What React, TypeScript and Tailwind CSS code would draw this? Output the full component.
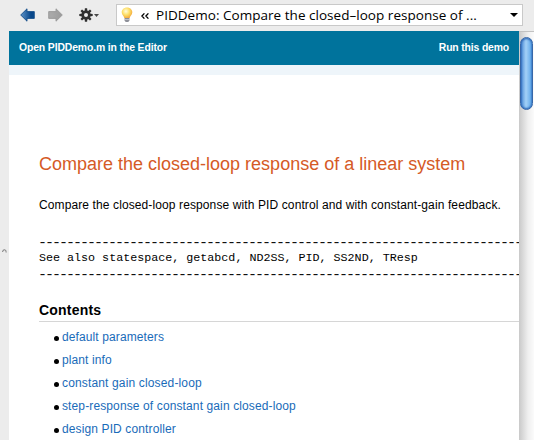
const contents = [
  { label: 'default parameters', track: 'tracking-[0.11px]' },
  { label: 'plant info', track: 'tracking-[0.1px]' },
  { label: 'constant gain closed-loop', track: 'tracking-[0.15px]' },
  { label: 'step-response of constant gain closed-loop', track: 'tracking-[0.12px]' },
  { label: 'design PID controller', track: 'tracking-[0.12px]' },
];

const rule = '-'.repeat(69);

function ArrowIcon({ forward = false }: { forward?: boolean }) {
  return (
    <svg width="15" height="14" viewBox="0 0 15 14" className={forward ? '-scale-x-100' : ''}>
      <defs>
        <linearGradient id={forward ? 'fwd' : 'back'} x1="0" x2="1">
          <stop offset="0" stopColor={forward ? '#9a9a9a' : '#5f94c8'} />
          <stop offset="0.75" stopColor={forward ? '#a8a8a8' : '#08478a'} />
        </linearGradient>
      </defs>
      <path
        d="M0.7 7 L7 0.8 V3.6 H14.3 V10.4 H7 V13.2 Z"
        fill={forward ? 'url(#fwd)' : 'url(#back)'}
        stroke={forward ? '#999999' : '#164f8a'}
        strokeWidth="0.9"
      />
    </svg>
  );
}

function GearIcon() {
  const angles = [0, 45, 90, 135, 180, 225, 270, 315];
  return (
    <svg width="14" height="14" viewBox="0 0 14 14">
      {angles.map((a) => (
        <path key={a} d="M5.6 3.5 L5.9 0.3 H8.1 L8.4 3.5 Z" fill="#303030" transform={`rotate(${a} 7 7)`} />
      ))}
      <circle cx="7" cy="7" r="3.3" fill="none" stroke="#303030" strokeWidth="2.6" />
    </svg>
  );
}

function BulbIcon() {
  return (
    <svg width="12" height="16" viewBox="0 0 12 16">
      <defs>
        <radialGradient id="bulb" cx="0.4" cy="0.35" r="0.65">
          <stop offset="0" stopColor="#fffbe0" />
          <stop offset="0.5" stopColor="#fde16b" />
          <stop offset="1" stopColor="#f3a93c" />
        </radialGradient>
      </defs>
      <path d="M6 0.5 C2.7 0.5 0.7 2.7 0.7 5.3 C0.7 7.8 2.8 8.8 3.4 11.3 H8.6 C9.2 8.8 11.3 7.8 11.3 5.3 C11.3 2.7 9.3 0.5 6 0.5 Z" fill="url(#bulb)" />
      <path d="M3.6 11 H8.4 V13.5 L7.3 15 H4.7 L3.6 13.5 Z" fill="#8e9099" />
      <path d="M3.6 12.5 H8.4" stroke="#cccdd2" strokeWidth="0.8" />
    </svg>
  );
}

function Toolbar() {
  return (
    <header className="flex h-[31px] shrink-0 items-start bg-[#ececec]">
      <div className="flex h-[30px] w-[116px] items-center pl-5">
        <ArrowIcon />
        <div className="ml-[13px] flex"><ArrowIcon forward /></div>
        <div className="ml-4 flex"><GearIcon /></div>
        <svg className="ml-px" width="5" height="3" viewBox="0 0 5 3"><path d="M0 0 H5 L2.5 3 Z" fill="#484848" /></svg>
      </div>
      <div className="mt-1 flex h-[22px] w-[407px] items-center border border-[#c9c9c9] bg-white pr-[4px] pl-[4px]">
        <BulbIcon />
        <svg className="mt-px ml-[8px]" width="8" height="6" viewBox="0 0 8 6">
          <path d="M3.4 0.4 L0.9 3 L3.4 5.6 M7.4 0.4 L4.9 3 L7.4 5.6" fill="none" stroke="#000" strokeWidth="1.3" />
        </svg>
        <span className="ml-[7px] flex-1 whitespace-nowrap font-['Open_Sans',sans-serif] text-[13.5px] leading-5 tracking-[0.03px] text-black">
          PIDDemo: Compare the closed–loop response of ...
        </span>
        <svg width="8" height="4" viewBox="0 0 8 4"><path d="M0 0 H8 L4 4 Z" fill="#000" /></svg>
      </div>
    </header>
  );
}

function Scrollbar() {
  return (
    <div className="w-[15px] shrink-0 border-t border-[#c2c2c2] bg-linear-to-r from-[#c9c9c9] via-[#efefef] via-60% to-[#fbfbfb] pt-[5px] pl-px">
      <div className="h-[73px] w-[13px] rounded-full border border-[#3767a8] bg-linear-to-r from-[#4b8bd4] via-[#a3d1f7] via-45% to-[#5aa5e8] shadow-[inset_0_1px_2px_#2b61b0,inset_0_-1px_2px_#2b6abb]" />
    </div>
  );
}

function DashedRule() {
  return (
    <span className="-ml-px block h-4 text-[15px] leading-[19px] tracking-[-2px] text-[#111]">{rule}</span>
  );
}

export default function App() {
  return (
    <div className="flex h-[440px] w-[534px] flex-col overflow-hidden bg-white font-['Liberation_Sans',Arial,sans-serif] text-black">
      <Toolbar />
      <div className="flex min-h-0 flex-1">
        <aside className="w-[9px] shrink-0 bg-[#ececec] pt-[218px] pl-[2px]">
          <svg width="5" height="5" viewBox="0 0 5 5"><path d="M0.5 3 Q1 0.7 2.7 0.8 Q4.2 1 4.2 3.5" fill="none" stroke="#858585" strokeWidth="1.1" /></svg>
        </aside>
        <main className="min-w-0 flex-1 overflow-hidden">
          <nav className="flex h-[34px] items-center justify-between bg-[#00739c] px-[10px] pb-px text-[10.4px] font-bold text-white">
            <span className="tracking-[-0.12px]">Open PIDDemo.m in the Editor</span>
            <span className="tracking-[-0.15px]">Run this demo</span>
          </nav>
          <div className="h-[10px] bg-[#eef5fa]" />
          <article className="pl-[30px]">
            <h1 className="mt-[78px] text-[18px] leading-[22px] whitespace-nowrap text-[#d55a26]">
              Compare the closed-loop response of a linear system
            </h1>
            <p className="mt-[22px] text-[12px] leading-4 tracking-[0.11px] whitespace-nowrap">
              Compare the closed-loop response with PID control and with constant-gain feedback.
            </p>
            <pre className="mt-[21px] font-['Liberation_Mono','Courier_New',monospace] text-[11.69px] leading-4">
              <DashedRule />
              <span className="block">See also statespace, getabcd, ND2SS, PID, SS2ND, TResp</span>
              <DashedRule />
            </pre>
            <h2 className="mt-5 h-[20px] border-b border-[#d6d6d6] text-[14px] leading-4 font-bold tracking-[0.2px]">Contents</h2>
            <ul className="mt-[3px]">
              {contents.map((item) => (
                <li key={item.label} className="flex h-[23px] items-center pl-[15px] text-[12px] whitespace-nowrap text-[#196bb9]">
                  <span className="mt-[3px] mr-[3px] size-[5px] rounded-full bg-black" />
                  <a className={item.track}>{item.label}</a>
                </li>
              ))}
            </ul>
          </article>
        </main>
        <Scrollbar />
      </div>
    </div>
  );
}
